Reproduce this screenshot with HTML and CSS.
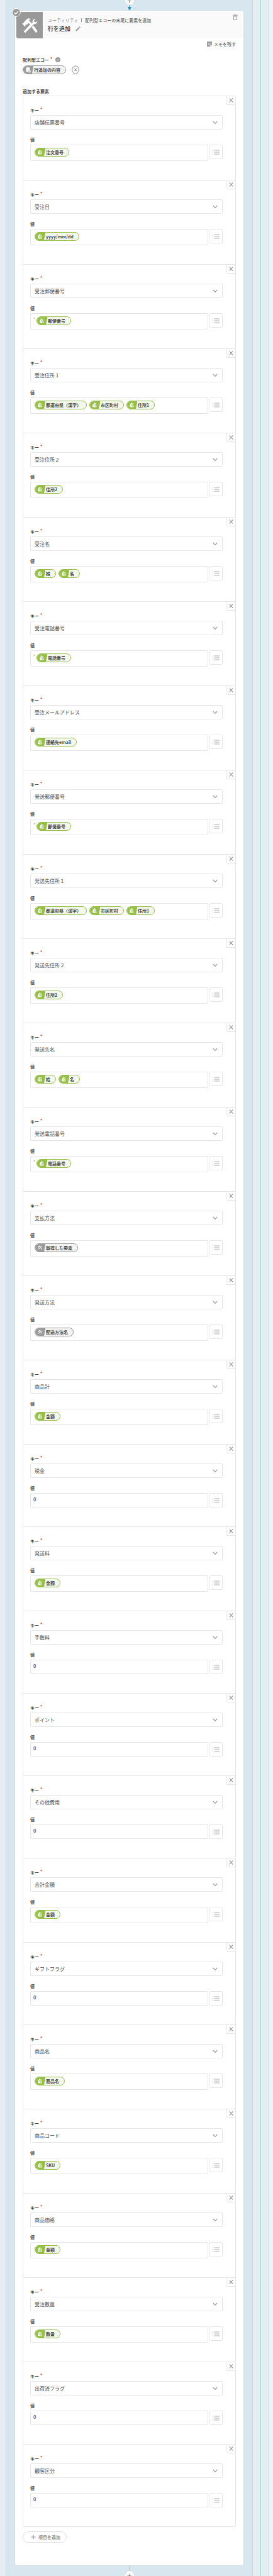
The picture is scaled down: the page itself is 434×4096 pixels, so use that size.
FILE: index.html
```html
<!DOCTYPE html>
<html lang="ja">
<head>
<meta charset="utf-8">
<meta name="viewport" content="width=device-width, initial-scale=1">
<title>行を追加</title>
<link rel="stylesheet" href="styles.css">
</head>
<body>
<svg class="sprite" aria-hidden="true">
<symbol id="shop" viewBox="0 0 16 12"><path fill="#95bf47" d="M0 0h16.500L14 12H0z"/><path fill="#fff" d="M4.800 4.300 6 3.900C6.200 2.900 6.900 2.300 7.800 2.300L8.400 2.900 9.500 3.100 10.500 9.200 8.600 9.800 4 9z"/><path fill="none" stroke="#95bf47" stroke-width=".7" d="M7.900 4.900c-1-.5-1.800.2-1.400.8.300.4 1 .6.900 1.200-.1.600-.9.700-1.500.3M8.700 3v6.700"/></symbol>
<symbol id="tools-shape" viewBox="0 0 24 24"><path d="M3.200 21.200 12.900 11 10.800 8.800 7.900 11.500 7.100 10.600 5.700 12.200 6.400 13.100 5.100 14.300 1.300 9.800 2.400 8.700 3.700 8.600 4.500 6.800 8 3.200C9.800 1.700 12 1.700 13.600 2.800L11.300 4.700 12 6.100 15.100 9.200 16.500 7.800C15.600 5.200 17.500 2.600 20.700 3L18.600 5.300 19.100 7.300 21.100 7.900 23.300 5.800C23.700 8.900 21.200 11 18.600 10.300L5.600 23.400z"/><path d="m15.100 14.900 2.500-2.400 6.200 8.300-2.500 2.600z"/></symbol>
<symbol id="util" viewBox="0 0 16 12"><path fill="#9b9b9b" d="M0 0h16.500L14 12H0z"/><use href="#tools-shape" x="4" y="2" width="7" height="7" fill="#fff"/></symbol>
<symbol id="memo-head" viewBox="0 0 16 12"><path fill="#9b9b9b" d="M0 0h16.500L14 12H0z"/><path fill="#fff" d="M4.500 3.300q0-1 1-1h4q1 0 1 1V6a2.500 2.500 0 0 0-2.900 3.300H5.500q-1 0-1-1z"/><circle cx="10" cy="8.400" r="2" fill="#fff"/><path stroke="#9b9b9b" stroke-width=".7" d="M8.600 8.400h2.800"/></symbol>
<symbol id="x" viewBox="0 0 8 8"><path fill="none" stroke="#949494" stroke-width="1.200" d="m.8.500 6.400 7M7.200.500.8 7.500"/></symbol>
<symbol id="down" viewBox="0 0 8 6"><path fill="none" stroke="#999" stroke-width="1.200" d="m.8 1 3.200 3.400L7.200 1"/></symbol>
<symbol id="list" viewBox="0 0 11 8"><path stroke="#999" stroke-width=".8" d="M0 1h1M2.500 1H11M0 4h1M2.500 4H11M0 7h1M2.500 7H11"/></symbol>
<symbol id="plus" viewBox="0 0 8 8"><path stroke="#8c8c8c" stroke-width="1" d="M4 .5v7M.5 4h7"/></symbol>
</svg>
<main class="flow"><div class="branch"><div class="lane">
<button class="add add-top" type="button" aria-label="ステップを追加"><svg width="7" height="7"><use href="#plus"/></svg></button>
<svg class="arrow" viewBox="0 0 6 9" aria-hidden="true"><path stroke="#2691b5" d="M3 0v5"/><path fill="#2691b5" d="M0 3h6L3 9z"/></svg>
<section class="card">
<svg class="done" viewBox="0 0 14 14" aria-hidden="true"><circle cx="7" cy="7" r="6.300" fill="#999" stroke="#fff" stroke-width=".8"/><path fill="none" stroke="#fff" stroke-width="1.500" d="m3.700 7 2.300 2.200 4-4.200"/></svg>
<header class="head">
<div class="app"><svg viewBox="0 0 24 24" width="26" height="26" fill="#fff" aria-hidden="true"><use href="#tools-shape"/></svg></div>
<div class="titles">
<p class="crumb"><span class="app-name">ユーティリティ</span><span class="action">配列型エコーの末尾に要素を追加</span></p>
<div class="title-row"><h1>行を追加</h1><button type="button" class="bare" aria-label="名前を編集"><svg width="8" height="8" viewBox="0 0 8 8" fill="#999"><path d="M.4 6.100 4.900 1.600l1.500 1.500L1.900 7.600H.4zM5.400 1.100l.8-.8q.4-.3.800 0l.7.700q.3.400 0 .8l-.8.800z"/></svg></button></div>
</div>
<button type="button" class="bare trash" aria-label="削除"><svg width="8" height="9" viewBox="0 0 8 9"><path fill="none" stroke="#999" d="M0 1.200h8M2.600.4h2.800M1.500 3h5v5.400h-5z"/></svg></button>
</header>
<div class="body">
<button type="button" class="bare memo"><svg width="8" height="8" viewBox="0 0 8 8"><path fill="#999" d="M0 .5Q0 0 .5 0h7q.5 0 .5.5v5L5.500 8h-5Q0 8 0 7.500z"/><path stroke="#fff" stroke-width=".8" fill="none" d="M1.700 2.500h4.600M1.700 4.300h2.600M5.300 7.400V5.300h2.200"/></svg>メモを残す</button>
<div class="echo">
<h2 class="label" id="echo">配列型エコー<b class="req">*</b><svg class="info" width="8" height="8" viewBox="0 0 8 8"><circle cx="4" cy="4" r="4" fill="#999"/><path stroke="#ddd" stroke-width="1" d="M4 1.500v1M4 3.200v3"/></svg></h2>
<div class="echo-row"><span class="chip grey"><svg><use href="#memo-head"/></svg>行追加の内容</span><button type="button" class="bare" aria-label="解除"><svg width="12" height="14" viewBox="0 0 12 14"><ellipse cx="6" cy="7" rx="5.300" ry="6.200" fill="none" stroke="#8c8c8c"/><path stroke="#808080" d="m4 4.700 4 4.600M8 4.700 4 9.300"/></svg></button></div>
</div>
<h2 class="label list-label">追加する要素</h2>
<ol class="items">
<li><button class="close" aria-label="削除"><svg><use href="#x"/></svg></button><label for="k1">キー<b class="req">*</b></label><div class="pick"><select id="k1"><option>店舗伝票番号</option></select><svg><use href="#down"/></svg></div><span class="label">値</span><div class="row"><div class="value"><span class="chip"><svg><use href="#shop"/></svg>注文番号</span></div><button class="menu" aria-label="一覧"><svg><use href="#list"/></svg></button></div></li>
<li><button class="close" aria-label="削除"><svg><use href="#x"/></svg></button><label for="k2">キー<b class="req">*</b></label><div class="pick"><select id="k2"><option>受注日</option></select><svg><use href="#down"/></svg></div><span class="label">値</span><div class="row"><div class="value"><span class="chip"><svg><use href="#shop"/></svg>yyyy/mm/dd</span></div><button class="menu" aria-label="一覧"><svg><use href="#list"/></svg></button></div></li>
<li><button class="close" aria-label="削除"><svg><use href="#x"/></svg></button><label for="k3">キー<b class="req">*</b></label><div class="pick"><select id="k3"><option>受注郵便番号</option></select><svg><use href="#down"/></svg></div><span class="label">値</span><div class="row"><div class="value quoted"><span>'</span><span class="chip"><svg><use href="#shop"/></svg>郵便番号</span></div><button class="menu" aria-label="一覧"><svg><use href="#list"/></svg></button></div></li>
<li><button class="close" aria-label="削除"><svg><use href="#x"/></svg></button><label for="k4">キー<b class="req">*</b></label><div class="pick"><select id="k4"><option>受注住所１</option></select><svg><use href="#down"/></svg></div><span class="label">値</span><div class="row"><div class="value"><span class="chip"><svg><use href="#shop"/></svg>都道府県（漢字）</span><span class="chip"><svg><use href="#shop"/></svg>市区町村</span><span class="chip"><svg><use href="#shop"/></svg>住所1</span></div><button class="menu" aria-label="一覧"><svg><use href="#list"/></svg></button></div></li>
<li><button class="close" aria-label="削除"><svg><use href="#x"/></svg></button><label for="k5">キー<b class="req">*</b></label><div class="pick"><select id="k5"><option>受注住所２</option></select><svg><use href="#down"/></svg></div><span class="label">値</span><div class="row"><div class="value"><span class="chip"><svg><use href="#shop"/></svg>住所2</span></div><button class="menu" aria-label="一覧"><svg><use href="#list"/></svg></button></div></li>
<li><button class="close" aria-label="削除"><svg><use href="#x"/></svg></button><label for="k6">キー<b class="req">*</b></label><div class="pick"><select id="k6"><option>受注名</option></select><svg><use href="#down"/></svg></div><span class="label">値</span><div class="row"><div class="value"><span class="chip"><svg><use href="#shop"/></svg>姓</span><span class="chip"><svg><use href="#shop"/></svg>名</span></div><button class="menu" aria-label="一覧"><svg><use href="#list"/></svg></button></div></li>
<li><button class="close" aria-label="削除"><svg><use href="#x"/></svg></button><label for="k7">キー<b class="req">*</b></label><div class="pick"><select id="k7"><option>受注電話番号</option></select><svg><use href="#down"/></svg></div><span class="label">値</span><div class="row"><div class="value quoted"><span>'</span><span class="chip"><svg><use href="#shop"/></svg>電話番号</span></div><button class="menu" aria-label="一覧"><svg><use href="#list"/></svg></button></div></li>
<li><button class="close" aria-label="削除"><svg><use href="#x"/></svg></button><label for="k8">キー<b class="req">*</b></label><div class="pick"><select id="k8"><option>受注メールアドレス</option></select><svg><use href="#down"/></svg></div><span class="label">値</span><div class="row"><div class="value"><span class="chip"><svg><use href="#shop"/></svg>連絡先email</span></div><button class="menu" aria-label="一覧"><svg><use href="#list"/></svg></button></div></li>
<li><button class="close" aria-label="削除"><svg><use href="#x"/></svg></button><label for="k9">キー<b class="req">*</b></label><div class="pick"><select id="k9"><option>発送郵便番号</option></select><svg><use href="#down"/></svg></div><span class="label">値</span><div class="row"><div class="value quoted"><span>'</span><span class="chip"><svg><use href="#shop"/></svg>郵便番号</span></div><button class="menu" aria-label="一覧"><svg><use href="#list"/></svg></button></div></li>
<li><button class="close" aria-label="削除"><svg><use href="#x"/></svg></button><label for="k10">キー<b class="req">*</b></label><div class="pick"><select id="k10"><option>発送先住所１</option></select><svg><use href="#down"/></svg></div><span class="label">値</span><div class="row"><div class="value"><span class="chip"><svg><use href="#shop"/></svg>都道府県（漢字）</span><span class="chip"><svg><use href="#shop"/></svg>市区町村</span><span class="chip"><svg><use href="#shop"/></svg>住所1</span></div><button class="menu" aria-label="一覧"><svg><use href="#list"/></svg></button></div></li>
<li><button class="close" aria-label="削除"><svg><use href="#x"/></svg></button><label for="k11">キー<b class="req">*</b></label><div class="pick"><select id="k11"><option>発送先住所２</option></select><svg><use href="#down"/></svg></div><span class="label">値</span><div class="row"><div class="value"><span class="chip"><svg><use href="#shop"/></svg>住所2</span></div><button class="menu" aria-label="一覧"><svg><use href="#list"/></svg></button></div></li>
<li><button class="close" aria-label="削除"><svg><use href="#x"/></svg></button><label for="k12">キー<b class="req">*</b></label><div class="pick"><select id="k12"><option>発送先名</option></select><svg><use href="#down"/></svg></div><span class="label">値</span><div class="row"><div class="value"><span class="chip"><svg><use href="#shop"/></svg>姓</span><span class="chip"><svg><use href="#shop"/></svg>名</span></div><button class="menu" aria-label="一覧"><svg><use href="#list"/></svg></button></div></li>
<li><button class="close" aria-label="削除"><svg><use href="#x"/></svg></button><label for="k13">キー<b class="req">*</b></label><div class="pick"><select id="k13"><option>発送電話番号</option></select><svg><use href="#down"/></svg></div><span class="label">値</span><div class="row"><div class="value quoted"><span>'</span><span class="chip"><svg><use href="#shop"/></svg>電話番号</span></div><button class="menu" aria-label="一覧"><svg><use href="#list"/></svg></button></div></li>
<li><button class="close" aria-label="削除"><svg><use href="#x"/></svg></button><label for="k14">キー<b class="req">*</b></label><div class="pick"><select id="k14"><option>支払方法</option></select><svg><use href="#down"/></svg></div><span class="label">値</span><div class="row"><div class="value"><span class="chip grey"><svg><use href="#util"/></svg>取得した要素</span></div><button class="menu" aria-label="一覧"><svg><use href="#list"/></svg></button></div></li>
<li><button class="close" aria-label="削除"><svg><use href="#x"/></svg></button><label for="k15">キー<b class="req">*</b></label><div class="pick"><select id="k15"><option>発送方法</option></select><svg><use href="#down"/></svg></div><span class="label">値</span><div class="row"><div class="value"><span class="chip grey"><svg><use href="#util"/></svg>配送方法名</span></div><button class="menu" aria-label="一覧"><svg><use href="#list"/></svg></button></div></li>
<li><button class="close" aria-label="削除"><svg><use href="#x"/></svg></button><label for="k16">キー<b class="req">*</b></label><div class="pick"><select id="k16"><option>商品計</option></select><svg><use href="#down"/></svg></div><span class="label">値</span><div class="row"><div class="value"><span class="chip"><svg><use href="#shop"/></svg>金額</span></div><button class="menu" aria-label="一覧"><svg><use href="#list"/></svg></button></div></li>
<li><button class="close" aria-label="削除"><svg><use href="#x"/></svg></button><label for="k17">キー<b class="req">*</b></label><div class="pick"><select id="k17"><option>税金</option></select><svg><use href="#down"/></svg></div><label for="v17">値</label><div class="row"><input id="v17" type="text" value="0"><button class="menu" aria-label="一覧"><svg><use href="#list"/></svg></button></div></li>
<li><button class="close" aria-label="削除"><svg><use href="#x"/></svg></button><label for="k18">キー<b class="req">*</b></label><div class="pick"><select id="k18"><option>発送料</option></select><svg><use href="#down"/></svg></div><span class="label">値</span><div class="row"><div class="value"><span class="chip"><svg><use href="#shop"/></svg>金額</span></div><button class="menu" aria-label="一覧"><svg><use href="#list"/></svg></button></div></li>
<li><button class="close" aria-label="削除"><svg><use href="#x"/></svg></button><label for="k19">キー<b class="req">*</b></label><div class="pick"><select id="k19"><option>手数料</option></select><svg><use href="#down"/></svg></div><label for="v19">値</label><div class="row"><input id="v19" type="text" value="0"><button class="menu" aria-label="一覧"><svg><use href="#list"/></svg></button></div></li>
<li><button class="close" aria-label="削除"><svg><use href="#x"/></svg></button><label for="k20">キー<b class="req">*</b></label><div class="pick"><select id="k20"><option>ポイント</option></select><svg><use href="#down"/></svg></div><label for="v20">値</label><div class="row"><input id="v20" type="text" value="0"><button class="menu" aria-label="一覧"><svg><use href="#list"/></svg></button></div></li>
<li><button class="close" aria-label="削除"><svg><use href="#x"/></svg></button><label for="k21">キー<b class="req">*</b></label><div class="pick"><select id="k21"><option>その他費用</option></select><svg><use href="#down"/></svg></div><label for="v21">値</label><div class="row"><input id="v21" type="text" value="0"><button class="menu" aria-label="一覧"><svg><use href="#list"/></svg></button></div></li>
<li><button class="close" aria-label="削除"><svg><use href="#x"/></svg></button><label for="k22">キー<b class="req">*</b></label><div class="pick"><select id="k22"><option>合計金額</option></select><svg><use href="#down"/></svg></div><span class="label">値</span><div class="row"><div class="value"><span class="chip"><svg><use href="#shop"/></svg>金額</span></div><button class="menu" aria-label="一覧"><svg><use href="#list"/></svg></button></div></li>
<li><button class="close" aria-label="削除"><svg><use href="#x"/></svg></button><label for="k23">キー<b class="req">*</b></label><div class="pick"><select id="k23"><option>ギフトフラグ</option></select><svg><use href="#down"/></svg></div><label for="v23">値</label><div class="row"><input id="v23" type="text" value="0"><button class="menu" aria-label="一覧"><svg><use href="#list"/></svg></button></div></li>
<li><button class="close" aria-label="削除"><svg><use href="#x"/></svg></button><label for="k24">キー<b class="req">*</b></label><div class="pick"><select id="k24"><option>商品名</option></select><svg><use href="#down"/></svg></div><span class="label">値</span><div class="row"><div class="value"><span class="chip"><svg><use href="#shop"/></svg>商品名</span></div><button class="menu" aria-label="一覧"><svg><use href="#list"/></svg></button></div></li>
<li><button class="close" aria-label="削除"><svg><use href="#x"/></svg></button><label for="k25">キー<b class="req">*</b></label><div class="pick"><select id="k25"><option>商品コード</option></select><svg><use href="#down"/></svg></div><span class="label">値</span><div class="row"><div class="value"><span class="chip"><svg><use href="#shop"/></svg>SKU</span></div><button class="menu" aria-label="一覧"><svg><use href="#list"/></svg></button></div></li>
<li><button class="close" aria-label="削除"><svg><use href="#x"/></svg></button><label for="k26">キー<b class="req">*</b></label><div class="pick"><select id="k26"><option>商品価格</option></select><svg><use href="#down"/></svg></div><span class="label">値</span><div class="row"><div class="value"><span class="chip"><svg><use href="#shop"/></svg>金額</span></div><button class="menu" aria-label="一覧"><svg><use href="#list"/></svg></button></div></li>
<li><button class="close" aria-label="削除"><svg><use href="#x"/></svg></button><label for="k27">キー<b class="req">*</b></label><div class="pick"><select id="k27"><option>受注数量</option></select><svg><use href="#down"/></svg></div><span class="label">値</span><div class="row"><div class="value"><span class="chip"><svg><use href="#shop"/></svg>数量</span></div><button class="menu" aria-label="一覧"><svg><use href="#list"/></svg></button></div></li>
<li><button class="close" aria-label="削除"><svg><use href="#x"/></svg></button><label for="k28">キー<b class="req">*</b></label><div class="pick"><select id="k28"><option>出荷済フラグ</option></select><svg><use href="#down"/></svg></div><label for="v28">値</label><div class="row"><input id="v28" type="text" value="0"><button class="menu" aria-label="一覧"><svg><use href="#list"/></svg></button></div></li>
<li><button class="close" aria-label="削除"><svg><use href="#x"/></svg></button><label for="k29">キー<b class="req">*</b></label><div class="pick"><select id="k29"><option>顧客区分</option></select><svg><use href="#down"/></svg></div><label for="v29">値</label><div class="row"><input id="v29" type="text" value="0"><button class="menu" aria-label="一覧"><svg><use href="#list"/></svg></button></div></li>
</ol>
<button type="button" class="append"><svg width="8" height="8"><use href="#plus"/></svg>項目を追加</button>
</div>
</section>
<button class="add add-bottom" type="button" aria-label="ステップを追加"><svg width="7" height="7"><use href="#plus"/></svg></button>
</div></div></main>
</body>
</html>
```
FILE: styles.css
```css
* { box-sizing: border-box; margin: 0; padding: 0; }
body {
  background: #edf3f8;
  color: #4a4a4a;
  font: 7px/10px "Noto Sans CJK JP", sans-serif;
}
button, input, select { font: inherit; color: inherit; }
button { cursor: pointer; }
svg { display: block; flex: none; }
.sprite { position: absolute; width: 0; height: 0; }

/* nested flow lanes */
.flow { margin-right: 6px; border-right: 1px solid #c6dfea; background: #e4ecf4; }
.branch { margin-right: 12px; border-right: 1px solid #9fd9c8; }
.lane {
  position: relative;
  overflow: hidden;
  margin: 0 12px 0 9px;
  padding: 17px 14px;
  border: solid #bfdce7;
  border-width: 0 1px;
  background: #d8e6ef;
}
.add {
  position: absolute;
  left: 50%;
  display: grid;
  place-items: center;
  width: 14px;
  height: 14px;
  border: 0;
  border-radius: 50%;
  background: #fafafa;
  box-shadow: 0 0 1px #b9c6cf;
  transform: translateX(-50%);
}
.add-top { top: -6px; }
.add-bottom { bottom: -6px; }
.add-bottom::before {
  content: "";
  position: absolute;
  bottom: 100%;
  width: 1px;
  height: 9px;
  background: #a6cfdf;
}
.arrow { position: absolute; top: 8px; left: 50%; width: 6px; height: 9px; transform: translateX(-50%); }

.card {
  position: relative;
  padding: 2px;
  border-radius: 3px;
  background: #fff;
  box-shadow: 0 0 2px #bccdd8;
}
.done { position: absolute; top: -4px; left: -5px; width: 14px; height: 14px; }
.head { display: flex; min-height: 42px; border-radius: 3px; background: #fafafa; }
.app {
  display: grid;
  place-items: center;
  width: 42px;
  border-radius: 3px 0 0 3px;
  background: #999;
}
.titles { flex: 1; padding: 8px; }
.crumb { display: flex; gap: 5px; }
.app-name { color: #8c8c8c; }
.crumb .action::before { content: ""; display: inline-block; width: 1px; height: 6px; margin-right: 5px; background: #999; }
.title-row { display: flex; align-items: center; gap: 8px; padding-top: 2px; }
h1 { font-size: 9px; line-height: 14px; }
.bare { border: 0; background: none; }
.trash { align-self: flex-start; padding: 4px 7px; }

.body { padding: 4px 10px 34px; }
.memo { display: flex; align-items: center; gap: 3px; margin-left: auto; }
.echo { padding-top: 15px; }
.label, label { display: flex; font-size: 7px; line-height: 10px; font-weight: 700; }
.req { padding-left: 2px; color: #e02b20; font-size: 6px; line-height: 8px; }
.info { align-self: center; margin-left: 5px; }
.echo-row { display: flex; align-items: center; gap: 9px; padding-top: 4px; }
.list-label { padding: 22px 0 2px; }

.chip {
  display: inline-flex;
  align-items: center;
  gap: 1px;
  height: 14px;
  padding-right: 8px;
  overflow: hidden;
  border: 1px solid #95bf47;
  border-radius: 7px;
  background: #f4f8ec;
  font-weight: 700;
}
.chip svg { width: 16px; height: 12px; }
.chip.grey { border-color: #9b9b9b; background: #f3f3f3; }

.items { list-style: none; border: solid #e6e6e6; border-width: 0 1px 1px; border-radius: 2px; }
.items li {
  position: relative;
  padding: 17px 20px 30px 11px;
  border-top: 1px solid #e6e6e6;
}
.items li:first-child { border-radius: 2px 2px 0 0; }
.close {
  position: absolute;
  top: 0;
  right: 0;
  display: grid;
  place-items: center;
  width: 14px;
  height: 14px;
  border: solid #e6e6e6;
  border-width: 0 0 1px 1px;
  border-radius: 0 0 0 2px;
  background: none;
}
.close svg { width: 7px; height: 7px; }
.pick { position: relative; margin: 3px 0 11px; }
.pick svg { position: absolute; top: 9px; right: 8px; width: 8px; height: 6px; pointer-events: none; }
select, input, .value, .menu { border: 1px solid #e6e6e6; border-radius: 2px; background: #fff; }
select {
  appearance: none;
  display: block;
  width: 100%;
  height: 23px;
  padding: 0 20px 0 6px;
  font-size: 8px;
}
.row { display: flex; align-items: flex-start; gap: 2px; padding-top: 3px; }
.value { display: flex; flex: 1; gap: 4px; min-height: 26px; padding: 4px 6px; }
.value.quoted { gap: 2px; padding-left: 5px; color: #111; }
.quoted .chip { color: #4a4a4a; }
input {
  flex: 1;
  min-width: 0;
  height: 23px;
  padding: 0 4px 3px;
  color: #111;
  font-family: Inter, sans-serif;
}
.menu { display: grid; place-items: center; width: 21px; height: 23px; }
.menu svg { width: 11px; height: 8px; }

.append {
  display: flex;
  align-items: center;
  gap: 4px;
  height: 18px;
  margin-top: 7px;
  padding: 0 9px 0 12px;
  border: 1px solid #dedede;
  border-radius: 9px;
  background: #fff;
  color: #8c8c8c;
  font-weight: 700;
}
```
